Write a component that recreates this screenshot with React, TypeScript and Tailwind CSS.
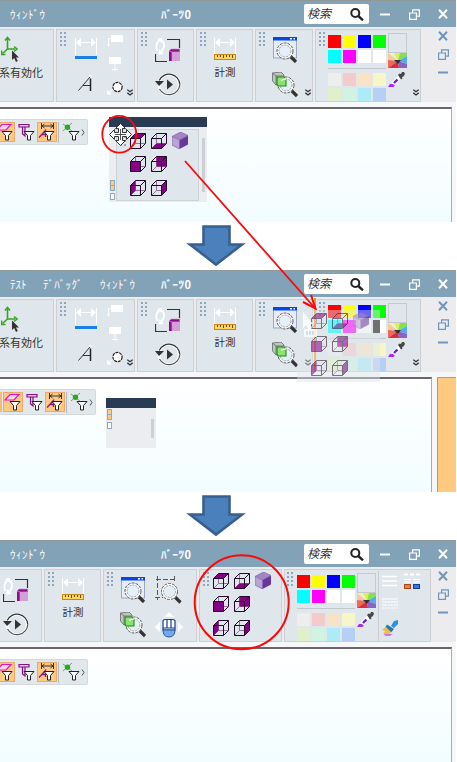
import React from "react";

type Face = "top" | "bottom" | "front" | "back" | "left" | "right";

const FACES: Record<Face, string> = {
  top: "M.5 5.5L5.5.5H15.5L10.5 5.5Z",
  bottom: "M.5 15.5L5.5 10.5H15.5L10.5 15.5Z",
  front: "M.5 5.5H10.5V15.5H.5Z",
  back: "M5.5.5H15.5V10.5H5.5Z",
  left: "M.5 5.5L5.5.5V10.5L.5 15.5Z",
  right: "M10.5 5.5L15.5.5V10.5L10.5 15.5Z",
};

function Cube({ face }: { face: Face }) {
  return (
    <svg width="16" height="16" viewBox="0 0 16 16" fill="none">
      <path d="M5.5 .5V10.5H15.5M5.5 10.5L.5 15.5" stroke="#8f7396" />
      <path d={FACES[face]} fill="#860086" />
      <path d="M.5 5.5H10.5V15.5H.5ZM.5 5.5L5.5.5H15.5V10.5L10.5 15.5M10.5 5.5L15.5.5" stroke="#250828" />
    </svg>
  );
}

function SolidCube() {
  return (
    <svg width="16" height="17" viewBox="0 0 16 17">
      <path d="M0 4.5L8.5 0 16 3.5 7.5 8Z" fill="#a486c4" />
      <path d="M0 4.500L7.5 8V17L0 13Z" fill="#b9a4d4" />
      <path d="M7.5 8L16 3.5V12.5L7.5 17Z" fill="#67389a" />
      <path d="M0 4.5L7.5 8V17L0 13ZM7.5 8L16 3.5M8.5 0L16 3.5M0 4.5L8.5 0" fill="none" stroke="#8560aa" strokeWidth=".7" />
    </svg>
  );
}

function CubeGrid() {
  return (
    <div className="flex gap-[5px]">
      <div className="flex flex-col">
        <Cube face="top" />
        <div className="mt-[7px]"><Cube face="front" /></div>
        <div className="mt-[8px]"><Cube face="left" /></div>
      </div>
      <div className="flex flex-col">
        <Cube face="bottom" />
        <div className="mt-[7px]"><Cube face="back" /></div>
        <div className="mt-[8px]"><Cube face="right" /></div>
      </div>
      <div className="-mt-px"><SolidCube /></div>
    </div>
  );
}

function Handle() {
  return (
    <div className="mt-[2px] grid h-[14px] w-[6px] shrink-0 grid-cols-2 gap-[2px]">
      {Array.from({ length: 8 }, (_, i) => (
        <i key={i} className="h-[2px] w-[2px] bg-[#8ea6be]" />
      ))}
    </div>
  );
}

function More() {
  return (
    <svg width="6" height="7" viewBox="0 0 6 7" fill="none" stroke="#333" strokeWidth="1.3">
      <path d="M.3.7L3 2.8 5.7.7M.3 3.8L3 6 5.7 3.8" />
    </svg>
  );
}

function Group({ className, children }: { className: string; children: React.ReactNode }) {
  return (
    <div className={"flex h-[73px] shrink-0 overflow-hidden border border-[#cdd0d3] bg-[#dfe7ec] " + className}>
      {children}
    </div>
  );
}

function AxisGroup() {
  return (
    <Group className="w-[54px] flex-col border-l-0">
      <svg className="ml-px mt-[6px] shrink-0" width="18" height="27" viewBox="0 0 18 27">
        <g stroke="#35a51f" strokeWidth="1.6" fill="none">
          <path d="M6.5 13V3M6.5 13H14M6.5 13L1.5 17.5" />
          <path d="M4 4.5L6.5 1.5 9 4.5M13 10.5L16 13 13 15.5M.5 14.5V18.5H4.5" />
        </g>
        <path d="M11 14.5V24L13.2 22 15 26 16.8 25 15 21.5H18Z" fill="#333" />
      </svg>
      <div className="-ml-px mt-[2px] whitespace-nowrap text-[11px] leading-[14px] text-[#333]">系有効化</div>
    </Group>
  );
}

function Span({ ruler }: { ruler?: boolean }) {
  return (
    <svg className="shrink-0" width="22" height="23" viewBox="0 0 22 23">
      <path d="M.5 0V17M21.5 0V17M2 4.5H20" stroke="#fff" />
      <path d="M1 4.5L6 0V9ZM21 4.5L16 0V9Z" fill="#fff" />
      {ruler ? (
        <g>
          <rect x=".5" y="16.5" width="21" height="5" fill="#fad561" stroke="#c38a14" />
          <path d="M3.5 17V19M6.5 17V19M9.5 17V20M12.5 17V19M15.5 17V19M18.5 17V20" stroke="#6b4a08" />
        </g>
      ) : (
        <path d="M0 20.500H22" transform="translate(0 -1)" stroke="#1a7fe6" strokeWidth="3" />
      )}
    </svg>
  );
}

function AnnotateGroup() {
  return (
    <Group className="w-[79px]">
      <div className="ml-[3px]"><Handle /></div>
      <div className="ml-[9px] mt-[8px] flex shrink-0 flex-col">
        <Span />
        <svg className="ml-[3px] mt-[14px]" width="15" height="17" viewBox="0 0 15 17" fill="none">
          <path d="M.5 15.500L12 2M5 10.500H12" stroke="#333" />
          <path d="M12.500 3.500V16" stroke="#222" strokeWidth="1.500" />
          <path d="M11.500 1.500V0L14 2" stroke="#fff" />
        </svg>
      </div>
      <div className="ml-[10px] mt-[5px] flex shrink-0 flex-col">
        <svg width="17" height="13" viewBox="0 0 17 13"><path d="M4 0H16V7H4Z" fill="#fff" /><path d="M4 3.5H1.5V10" fill="none" stroke="#fff" /><path d="M0 9H3L1.5 12Z" fill="#fff" /></svg>
        <svg className="mt-[9px]" width="17" height="14" viewBox="0 0 17 14"><path d="M2 0H14V7H2ZM7.5 7H8.5V14H7.5ZM5 12H11V13H5Z" fill="#fff" /></svg>
        <svg className="mt-[10px]" width="17" height="14" viewBox="0 0 17 14"><path d="M1 12L6 8M0 13H4L0 9Z" stroke="#fff" fill="#fff" /><circle cx="10.5" cy="6" r="4.600" fill="#fff" stroke="#222" strokeWidth="1.200" strokeDasharray="3 .8" /></svg>
      </div>
      <div className="ml-[3px] mt-[59px] shrink-0"><More /></div>
    </Group>
  );
}

function RefreshGroup() {
  return (
    <Group className="w-[57px]">
      <div className="ml-[3px]"><Handle /></div>
      <div className="ml-[8px] mt-[6px] flex shrink-0 flex-col">
        <svg width="26" height="27" viewBox="0 0 26 27">
          <path d="M12 3.500H24.500V12M.5 18V25.500H12" fill="none" stroke="#333" strokeWidth="1.200" />
          <path d="M2.500 15Q-.5 9 4 4.500M7.500 4.500Q11 10 6.500 15.500" fill="none" stroke="#fff" strokeWidth="1.800" />
          <path d="M2 3L7 1.500V7ZM4 13L9 18 3.500 18.500Z" fill="#fff" />
          <path d="M14 15L16 13H25V24L23 25H14Z" fill="#871087" />
          <path d="M17 16H25V25H17Z" fill="#d49fd4" />
          <path d="M14 15L16 13H25L24 16H17ZM17 16V25" fill="none" stroke="#d890d8" strokeWidth=".7" />
        </svg>
        <svg className="mt-[9px]" width="26" height="25" viewBox="0 0 26 25" fill="none">
          <circle cx="14" cy="12.5" r="10.200" stroke="#fff" strokeWidth="2.600" />
          <path d="M4.2 8.5A10.8 10.8 0 0 1 24.800 12.500" stroke="#333" strokeWidth="1.200" />
          <path d="M24.800 12.500A10.800 10.800 0 0 1 4.500 17" stroke="#555" strokeWidth="1.200" />
          <path d="M0 9H9L4 14ZM12 7.5V17.5L18 12.5Z" fill="#333" />
        </svg>
      </div>
    </Group>
  );
}

function MeasureGroup() {
  return (
    <Group className="w-[57px]">
      <div className="ml-[3px]"><Handle /></div>
      <div className="ml-[8px] mt-[8px] flex flex-col items-center">
        <Span ruler />
        <div className="mt-[4px] whitespace-nowrap text-[10.5px] leading-[14px] text-[#333]">計測</div>
      </div>
    </Group>
  );
}

function Lens() {
  return (
    <g>
      <path d="M17.5 19.5L23 25" stroke="#333" strokeWidth="3.2" />
      <circle cx="12" cy="14" r="7.2" fill="#e4f0fa" fillOpacity=".85" stroke="#fff" strokeWidth="2.4" />
      <circle cx="12" cy="14" r="8" fill="none" stroke="#444" strokeWidth=".9" strokeDasharray="3 1" />
      <circle cx="12" cy="14" r="6" fill="none" stroke="#777" strokeWidth=".7" strokeDasharray="2 1" />
    </g>
  );
}

function ZoomGroup({ wide }: { wide?: boolean }) {
  return (
    <Group className={wide ? "w-[94px]" : "w-[58px]"}>
      <div className="ml-[3px]"><Handle /></div>
      <div className="ml-[7px] mt-[7px] flex shrink-0 flex-col">
        <svg className="ml-px" width="25" height="26" viewBox="0 0 25 26">
          <rect x=".5" y="1" width="23" height="20" fill="#e6edf8" stroke="#9ba7c7" />
          <path d="M0 0H24V3.5H0Z" fill="#0647e8" />
          <path d="M17 1H19V2.5H17ZM20.5 1H22V2.5H20.5Z" fill="#fff" />
          <Lens />
        </svg>
        <svg className="mt-[9px]" width="26" height="26" viewBox="0 0 26 26">
          <path d="M.5 1L9 0 12 3V11L4 13 .5 9Z" fill="#c1c5c6" stroke="#666" strokeWidth=".8" />
          <path d="M.5 1L4 4H12M4 4V13" stroke="#666" strokeWidth=".8" fill="none" />
          <g transform="translate(2 -1)"><Lens /></g>
          <path d="M5 5H12L14 8V14H6L5 12Z" fill="#8be36c" stroke="#178c14" strokeWidth="1.1" />
          <path d="M9 8.500Q11 7 14 7" stroke="#fff" fill="none" strokeWidth="1.500" />
        </svg>
      </div>
      {wide ? (
        <div className="ml-[9px] mt-[6px] flex shrink-0 flex-col">
          <svg width="28" height="28" viewBox="0 0 28 28">
            <path d="M1 3.5H22M2.5 0V24M0 21.5H8M19.5 0V7" stroke="#555" strokeDasharray="5 2" />
            <g transform="translate(2.5 1.5)"><Lens /></g>
          </svg>
          <svg className="mt-[8px]" width="28" height="27" viewBox="0 0 28 27">
            <path d="M14 0L19 5H9ZM0 15L5 10V20ZM28 15L23 10V20Z" fill="#fff" />
            <path d="M8 9Q8 7.500 11 7.500H17Q20 7.500 20 9V18H8Z" fill="#fff" stroke="#173f83" strokeWidth="1.2" />
            <path d="M8 18H20Q20 25 14 25Q8 25 8 18Z" fill="#74a7ed" stroke="#2457a1" />
            <path d="M12 7.500V16M16 7.500V16M8 16H20" stroke="#173f83" strokeWidth="1.2" />
          </svg>
        </div>
      ) : (
        <div className="ml-[7px] mt-[59px] shrink-0"><More /></div>
      )}
    </Group>
  );
}

function ViewGroup() {
  return (
    <Group className="w-[83px]">
      <div className="ml-[3px]"><Handle /></div>
      <div className="ml-[4px] mt-[3px]"><CubeGrid /></div>
    </Group>
  );
}

const BRIGHT = ["bg-[#ff0000]", "bg-[#ffff00]", "bg-[#0000ff]", "bg-[#00ff00]", "bg-[#00ffff]", "bg-[#ff00ff]", "bg-white", "bg-white"];
const PALE = ["bg-[#eeeeef]", "bg-[#f5caca]", "bg-[#f8e4c5]", "bg-[#f6f6c8]", "bg-[#dff1ca]", "bg-[#cff5e2]", "bg-[#adecf6]", "bg-[#b6d0f5]"];

function ColorGroup({ wide }: { wide?: boolean }) {
  return (
    <Group className={wide ? "w-[147px]" : "w-[106px]"}>
      <div className={wide ? "ml-[2px]" : "ml-[3px]"}><Handle /></div>
      <div className={"mt-[5px] flex w-[58px] shrink-0 flex-col " + (wide ? "ml-[4px]" : "ml-[3px]")}>
        <div className="grid grid-cols-4 gap-[2px]">
          {BRIGHT.map((c, i) => <i key={i} className={"h-[13px] " + c} />)}
        </div>
        <div className="mb-[4px] mt-[5px] h-px bg-[#c3c7c9]" />
        <div className="grid grid-cols-4 gap-[2px]">
          {PALE.map((c, i) => <i key={i} className={"h-[13px] " + c} />)}
        </div>
      </div>
      <div className="ml-[2px] mt-[3px] flex shrink-0 flex-col">
        <div className="h-[20px] w-[19px] border border-[#c6cacd]" />
        <svg width="19" height="15" viewBox="0 0 19 15">
          <path d="M0 0H7L10 8Z" fill="#eef0c4" />
          <path d="M6 0H13L10 8Z" fill="#d8f060" />
          <path d="M12 0H19V3L10 8Z" fill="#86e04a" />
          <path d="M19 3V11L10 8Z" fill="#58a8ed" />
          <path d="M0 0L10 8L0 7Z" fill="#f6c9a0" />
          <path d="M0 7L10 8L0 15Z" fill="#ee6a55" />
          <path d="M0 15L10 8L11 15Z" fill="#d92c3c" />
          <path d="M10 8L19 11V15H11Z" fill="#8a62c8" />
          <path d="M6 7H13L10 11Z" fill="#333" />
        </svg>
        <svg className="mt-[4px]" width="18" height="16" viewBox="0 0 18 16">
          <path d="M5 12L12 5" stroke="#fff" strokeWidth="4" />
          <path d="M6 11L9.500 7.500" stroke="#6a20d8" strokeWidth="2.400" />
          <path d="M10 3L11.500 1.500 13 2 14 0H16L17 2 15.500 4.500 14 5 14.500 6.500 13 7.500Z" fill="#474747" />
          <path d="M0 15L2 12H5L7 14 5 15Z" fill="#a52ceb" />
        </svg>
      </div>
      {wide ? (
        <>
          <div className="ml-[2px] mt-[1px] h-[70px] w-px shrink-0 bg-[#c9cdd0]" />
          <div className="ml-[3px] mt-[5px] flex shrink-0 flex-col">
            <svg width="16" height="12" viewBox="0 0 16 12"><path d="M0 1.5H15M0 6H15M0 10.5H15" stroke="#fff" strokeWidth="1.4" /></svg>
            <svg className="mt-[11px]" width="16" height="11" viewBox="0 0 16 11" stroke="#fff" strokeWidth="1.2"><path d="M0 1H16M0 4H16" /><path d="M0 7H16" strokeDasharray="5 1" /><path d="M0 10H16" strokeDasharray="2 1" /></svg>
            <svg className="mt-[11px]" width="17" height="16" viewBox="0 0 17 16">
              <path d="M9 6L12 1 16 0V4L12 8Z" fill="#2b94d5" />
              <path d="M5 4.500L12 9 9 12.500 3 8Z" fill="#2779b1" />
              <path d="M0 9.500L4 7 9 12 7 15 1 14 3 11.500Z" fill="#f2bb4f" />
              <path d="M2 14H11L8 16H3Z" fill="#c77be0" />
            </svg>
          </div>
          <svg className="ml-[5px] mt-[3px] shrink-0" width="17" height="17" viewBox="0 0 17 17">
            <path d="M0 1.5H16" stroke="#fff" strokeWidth="2" strokeDasharray="4 2" /><path d="M0 6.5H16M0 9H16" stroke="#fff" strokeDasharray="7 2" />
            <rect x=".5" y="11.5" width="6" height="4" fill="#ee7f35" stroke="#a44a19" /><rect x="9.5" y="11.5" width="6" height="4" fill="#297ce9" stroke="#123c98" />
          </svg>
        </>
      ) : (
        <div className="ml-[6px] mt-[59px] shrink-0"><More /></div>
      )}
    </Group>
  );
}

function Minus() {
  return <svg width="10" height="3" viewBox="0 0 10 3"><path d="M0 1.5H10" stroke="currentColor" strokeWidth="2" /></svg>;
}
function Restore() {
  return <svg width="11" height="11" viewBox="0 0 11 11" fill="none" stroke="currentColor" strokeWidth="1.2"><path d="M.6 4H7.4V10.4H.6ZM3.6 4V.8H10.4V7.2H7.4" /></svg>;
}
function Close() {
  return <svg width="10" height="10" viewBox="0 0 10 10" stroke="currentColor" strokeWidth="2"><path d="M1 .8L9 9.2M9 .8L1 9.2" /></svg>;
}

function TitleBar({ full }: { full?: boolean }) {
  return (
    <div className="flex h-[27px] border-t border-[#8f9998] bg-[#82a2b8] text-white">
      <div className="flex w-[161px] shrink-0 whitespace-pre pl-[10px] pt-[6px] text-[11px] leading-[14px]">
        {full && <span className="w-[33px] shrink-0">ﾃｽﾄ</span>}
        {full && <span className="w-[57px] shrink-0 tracking-[0.3px]">ﾃﾞﾊﾞｯｸﾞ</span>}
        <span className="tracking-[0.5px]">ｳｨﾝﾄﾞｳ</span>
      </div>
      <div className="w-[143px] shrink-0 pt-[6px] text-[11px] font-bold leading-[14px] tracking-[0.5px]">ﾊﾞｰﾂ0</div>
      <div className="mt-[3px] flex h-[20px] w-[65px] shrink-0 rounded-[2px] bg-white">
        <span className="ml-[3px] w-[43px] text-[12px] italic leading-[17px] text-[#333]">検索</span>
        <svg className="mt-[4px]" width="14" height="13" viewBox="0 0 14 13" fill="none" stroke="#222" strokeWidth="2"><circle cx="5.3" cy="5" r="4" /><path d="M8.3 8L13 12.3" strokeWidth="2.4" /></svg>
      </div>
      <div className="ml-[11px] mt-[12px]"><Minus /></div>
      <div className="ml-[19px] mt-[8px]"><Restore /></div>
      <div className="ml-[18px] mt-[8px]"><Close /></div>
    </div>
  );
}

function Funnel() {
  return <path d="M6 8.500H16L12.500 12.500V17H9.500V12.500Z" fill="#fff" stroke="#222" />;
}

function FilterBar({ shifted }: { shifted?: boolean }) {
  return (
    <div className={"flex h-[26px] items-center overflow-hidden rounded-r-[2px] border border-l-0 border-[#d3d9dd] bg-[#e1e8ec] " + (shifted ? "w-[96px]" : "w-[88px]")}>
      {shifted && <div className="mr-px h-[20px] w-[2px] shrink-0 bg-[#f5b978]" />}
      <div className={"flex h-[20px] w-[20px] shrink-0 items-center justify-center border border-[#f0a868] bg-[#ffc981] " + (shifted ? "" : "-ml-[5px]")}>
        <svg className="shrink-0" width="18" height="18" viewBox="0 0 18 18"><path d="M1 7L6 1.5H15L10 7Z" fill="#ffd5e8" stroke="#e014cc" strokeWidth="1.2" /><Funnel /></svg>
      </div>
      <svg className="ml-[3px] shrink-0" width="17" height="18" viewBox="0 0 17 18"><path d="M1 1.500H11V4H1ZM4.500 4V11L7 13V4" fill="#e9c7e9" stroke="#861086" strokeWidth="1.200" /><Funnel /></svg>
      <div className="ml-[2px] flex h-[20px] w-[20px] shrink-0 items-center justify-center border border-[#f0a868] bg-[#ffc981]">
        <svg className="shrink-0" width="18" height="18" viewBox="0 0 18 18"><path d="M3.500 0V6M15.500 0V6M4 3H15M6.500 1L4 3 6.500 5M12.500 1L15 3 12.500 5" fill="none" stroke="#333" /><path d="M1 14.500L7.500 7.500V14M4 11.500H8" stroke="#901090" strokeWidth="1.300" fill="none" /><Funnel /></svg>
      </div>
      <div className="ml-px h-[21px] w-px shrink-0 bg-[#b6bdc2]" />
      <svg className="ml-[4px] shrink-0" width="17" height="18" viewBox="0 0 17 18"><path d="M0 1L9 8M9 0L0 8" stroke="#777" strokeWidth=".8" /><circle cx="4.500" cy="4.300" r="2.700" fill="#1fae19" /><Funnel /></svg>
      <svg className="ml-px shrink-0" width="4" height="7" viewBox="0 0 4 7"><path d="M1 .5L3 3.5 1 6.5" fill="none" stroke="#555" /></svg>
    </div>
  );
}

function Screen({ variant, children }: { variant: 1 | 2 | 3; children?: React.ReactNode }) {
  const page = variant === 2 ? "w-[432px]" : "w-[452px]";
  return (
    <section className="relative h-[222px] w-[456px] overflow-hidden bg-[#f6f7f9]">
      <TitleBar full={variant === 2} />
      <div className="flex h-[75px] bg-[#ececee] pt-[2px]">
        <div className={"flex shrink-0 gap-[2px] " + (variant === 3 ? "-ml-[15px] w-[449px]" : "w-[434px]")}>
          {variant !== 3 && <AxisGroup />}
          {variant !== 3 && <AnnotateGroup />}
          <RefreshGroup />
          <MeasureGroup />
          <ZoomGroup wide={variant === 3} />
          {variant === 3 && <ViewGroup />}
          <ColorGroup wide={variant === 3} />
        </div>
        <div className="ml-[4px] mt-[2px] flex flex-col text-[#6f96bd]">
          <Close />
          <div className="mt-[8px]"><Restore /></div>
          <div className="mt-[11px]"><Minus /></div>
        </div>
      </div>
      <div className="mt-[5px] flex h-[115px] justify-between">
        <div className={"border-r border-t-2 border-r-[#a9abad] border-t-[#6b666d] bg-linear-to-b from-white to-[#f2fdff] pt-[10px] " + page}>
          <FilterBar shifted={variant === 2} />
        </div>
        {variant === 2 && <div className="w-[19px] border-l border-t border-[#b59a7c] bg-[#ffc980]" />}
      </div>
      {children}
    </section>
  );
}

function DownArrow() {
  return (
    <div className="flex h-[48px] pl-[186px] pt-[2px]">
      <svg width="60" height="43" viewBox="0 0 60 43"><path d="M17.5 2.5H43.5V20.5H56L30 40.5 4 20.5H17.5Z" fill="#4a81bd" stroke="#385f8e" strokeWidth="2.6" /></svg>
    </div>
  );
}

function FloatingPalette() {
  return (
    <div className="absolute left-[109px] top-[117px] flex h-[85px] w-[98px] flex-col bg-[#ebedf0]">
      <div className="h-[10px] shrink-0 bg-[#293a55]" />
      <div className="flex flex-1">
        <div className="flex w-[7px] flex-col gap-[2px] pl-px pt-[53px]">
          <div className="flex h-[11px] w-[5px] flex-col border border-[#91a9bf] bg-[#ffc980]"><div className="h-[5px] border-b border-[#91a9bf]" /></div>
          <div className="h-[7px] w-[5px] border border-[#91a9bf] bg-white" />
        </div>
        <div className="mt-[2px] flex h-[72px] w-[83px] border border-[#cdd2d6] bg-[#dfe7ec]">
          <div className="ml-[3px]"><Handle /></div>
          <div className="ml-[4px] mt-[3px]"><CubeGrid /></div>
        </div>
        <div className="ml-[3px] mt-[11px] h-[54px] w-[3px] bg-[#cbd0d6]" />
      </div>
    </div>
  );
}

function EmptyPalette() {
  return (
    <div className="absolute left-[106px] top-[128px] h-[50px] w-[50px] bg-[#ebedf0]">
      <div className="h-[10px] bg-[#293a55]" />
      <div className="flex justify-between">
        <div className="ml-px mt-px flex flex-col gap-[2px]">
          <div className="h-[11px] w-[5px] border border-[#91a9bf] bg-[#ffc980]"><div className="h-[5px] border-b border-[#91a9bf]" /></div>
          <div className="h-[7px] w-[5px] border border-[#91a9bf] bg-white" />
        </div>
        <div className="mr-[2px] mt-[11px] h-[19px] w-[3px] bg-[#cbd0d6]" />
      </div>
    </div>
  );
}

function DragGhost() {
  return (
    <>
      <div className="absolute left-[314px] top-[28px] h-[74px] w-[2px] bg-[#f89620]" />
      <div className="absolute left-[297px] top-[40px] h-[72px] w-[83px] bg-[#dfe7ec]/45 pl-[14px] pt-[3px]">
        <div className="opacity-55"><CubeGrid /></div>
      </div>
      <svg className="absolute left-[301px] top-[42px]" width="17" height="26" viewBox="0 0 17 26">
        <path d="M2 0V16L5 13 8 18 11 16 9 12H12Z" fill="#fff" opacity=".85" />
        <rect x="3" y="17" width="13" height="8" fill="#fff" opacity=".75" /><path d="M6 19V23M9 19V23M12 19V23" stroke="#abc7d6" />
      </svg>
      <i className="absolute left-[373px] top-[50px] h-[13px] w-[7px] bg-[#707070]" />
    </>
  );
}

export default function App() {
  return (
    <main className="relative h-[762px] w-[457px] overflow-hidden bg-white font-['Noto_Sans_CJK_JP','Liberation_Sans',sans-serif]">
      <Screen variant={1}><FloatingPalette /></Screen>
      <DownArrow />
      <Screen variant={2}><EmptyPalette /><DragGhost /></Screen>
      <DownArrow />
      <Screen variant={3} />
      <svg className="pointer-events-none absolute left-0 top-0" width="457" height="762" viewBox="0 0 457 762" fill="none">
        <path d="M120.500 123.500L125.500 128.500H122.500V132.500H126.500V129.500L131.500 134.500 126.500 139.500V136.500H122.500V140.500H125.500L120.500 145.500 115.500 140.500H118.500V136.500H114.500V139.500L109.500 134.500 114.500 129.500V132.500H118.500V128.500H115.500Z" fill="#fff" stroke="#333" />
        <path d="M120.500 129V140M115 134.500H126" stroke="#555" />
        <ellipse cx="119.300" cy="134.300" rx="17" ry="18.400" stroke="#f80a0a" strokeWidth="1.800" />
        <path d="M185 161L314 307" stroke="#f80a0a" strokeWidth="1.800" />
        <path d="M303 302L315.500 308.500 311 295" stroke="#f80a0a" strokeWidth="2" />
        <circle cx="241.700" cy="602.200" r="47" stroke="#f80a0a" strokeWidth="2" />
      </svg>
    </main>
  );
}
